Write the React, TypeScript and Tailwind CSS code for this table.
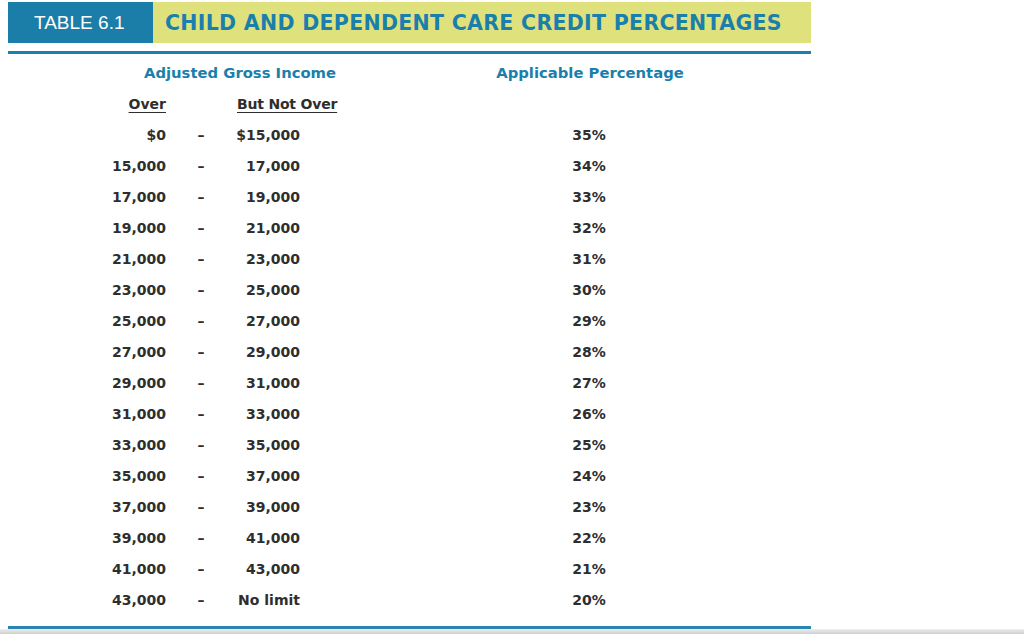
import React from 'react';

const rows: [string, string, string][] = [
  ['$0', '$15,000', '35%'],
  ['15,000', '17,000', '34%'],
  ['17,000', '19,000', '33%'],
  ['19,000', '21,000', '32%'],
  ['21,000', '23,000', '31%'],
  ['23,000', '25,000', '30%'],
  ['25,000', '27,000', '29%'],
  ['27,000', '29,000', '28%'],
  ['29,000', '31,000', '27%'],
  ['31,000', '33,000', '26%'],
  ['33,000', '35,000', '25%'],
  ['35,000', '37,000', '24%'],
  ['37,000', '39,000', '23%'],
  ['39,000', '41,000', '22%'],
  ['41,000', '43,000', '21%'],
  ['43,000', 'No limit', '20%'],
];

const App: React.FC = () => {
  return (
    <div className="h-[634px] w-[1024px] bg-white flex flex-col overflow-hidden font-['DejaVu_Sans',Verdana,sans-serif]">
      <div className="ml-2 mt-[2px] w-[803px] flex-1 flex flex-col">
        {/* Title bar */}
        <div className="flex h-[41px]">
          <div className="w-[145px] bg-[#1a7ea8] flex items-center pt-[2px] pl-[26px] text-white text-[19px] font-['Liberation_Sans',Arial,sans-serif]">
            TABLE 6.1
          </div>
          <div className="flex-1 bg-[#dfe27c] flex items-center pt-[2px] pl-[12px] text-[#1a7fab] text-[20.5px] font-bold tracking-[0.3px]">
            CHILD AND DEPENDENT CARE CREDIT PERCENTAGES
          </div>
        </div>
        <div className="mt-[8px] h-[3px] bg-[#1a7fab]" />

        {/* Table */}
        <div className="mt-[4px] text-[14px] font-bold text-[#2e2e2e]">
          <div className="flex h-[31px] items-center text-[#1a7fab] text-[14.8px]">
            <div className="w-[464px] text-center">Adjusted Gross Income</div>
            <div className="w-[236px] text-center">Applicable Percentage</div>
          </div>
          <div className="flex h-[31px] items-center">
            <div className="w-[158px] text-right underline underline-offset-[3px]">Over</div>
            <div className="ml-[71px] tracking-[-0.2px] underline underline-offset-[3px]">But Not Over</div>
          </div>
          {rows.map(([over, notOver, pct]) => (
            <div key={over} className="flex h-[31px] items-center">
              <div className="w-[158px] text-right">{over}</div>
              <div className="w-[70px] text-center">–</div>
              <div className="w-[64px] text-right">{notOver}</div>
              <div className="ml-[239px] w-[100px] text-center">{pct}</div>
            </div>
          ))}
        </div>

        <div className="mt-auto h-[3px] bg-[#2a86b0]" />
      </div>
      <div className="h-[5px] bg-gradient-to-b from-[#eeeeee] to-[#cfcfcf]" />
    </div>
  );
};

export default App;
